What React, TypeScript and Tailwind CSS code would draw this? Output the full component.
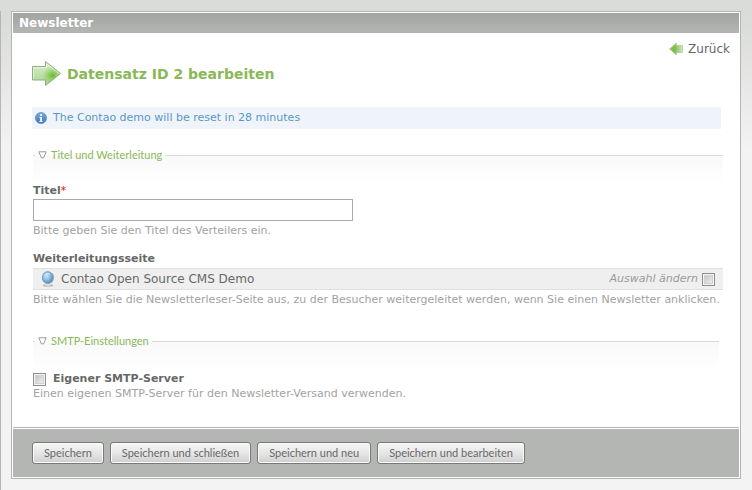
import React, { useState } from "react";

const submitButtons = [
  { name: "save", label: "Speichern" },
  { name: "saveNclose", label: "Speichern und schließen" },
  { name: "saveNcreate", label: "Speichern und neu" },
  { name: "saveNedit", label: "Speichern und bearbeiten" },
];

const ForwardIcon = () => (
  <svg width="30" height="26" viewBox="0 0 30 26" aria-hidden="true">
    <defs>
      <linearGradient id="fwdBase" x1="0" y1="0" x2="0" y2="1">
        <stop offset="0" stopColor="#dcefd2" />
        <stop offset="1" stopColor="#a9d48d" />
      </linearGradient>
      <radialGradient id="fwdGlow" cx="0.72" cy="0.58" r="0.4">
        <stop offset="0" stopColor="#6cbb2b" />
        <stop offset="1" stopColor="#8fce62" stopOpacity="0" />
      </radialGradient>
    </defs>
    <path
      d="M0.5 5.5H13.5V0.5L28.5 12.5L13.5 24.5V19H0.5Z"
      fill="url(#fwdBase)"
    />
    <path
      d="M0.5 5.5H13.5V0.5L28.5 12.5L13.5 24.5V19H0.5Z"
      fill="url(#fwdGlow)"
      stroke="#8fae80"
    />
    <path
      d="M1.5 18V6.5H14.5V2.8L27 12.5"
      fill="none"
      stroke="#fff"
      strokeOpacity="0.5"
    />
  </svg>
);

const BackIcon = () => (
  <svg width="14" height="14" viewBox="0 0 14 14" aria-hidden="true">
    <defs>
      <linearGradient id="backFill" x1="0" y1="0" x2="1" y2="0">
        <stop offset="0" stopColor="#8cc860" />
        <stop offset="0.4" stopColor="#7cbf48" />
        <stop offset="1" stopColor="#cfe8c0" />
      </linearGradient>
    </defs>
    <path
      d="M0.5 7L7.5 1V3.5H13.5V10.5H7.5V13Z"
      fill="url(#backFill)"
      stroke="#a9c99a"
      strokeWidth="0.7"
    />
  </svg>
);

const InfoIcon = () => (
  <svg width="12" height="12" viewBox="0 0 12 12" aria-hidden="true">
    <defs>
      <linearGradient id="infoFill" x1="0" y1="0" x2="0" y2="1">
        <stop offset="0" stopColor="#7fa9d8" />
        <stop offset="1" stopColor="#3c76bb" />
      </linearGradient>
    </defs>
    <circle cx="6" cy="6" r="5.6" fill="url(#infoFill)" stroke="#5b8cc6" strokeWidth="0.7" />
    <circle cx="6" cy="3" r="1.1" fill="#fff" />
    <path d="M4.5 5H6.9V9H7.7V9.9H4.4V9H5.2V5.9H4.5Z" fill="#fff" />
  </svg>
);

const GlobeIcon = () => (
  <svg width="14" height="16" viewBox="0 0 14 16" aria-hidden="true">
    <defs>
      <radialGradient id="globeFill" cx="0.4" cy="0.35" r="0.7">
        <stop offset="0" stopColor="#cfe5f5" />
        <stop offset="0.5" stopColor="#8dbbe0" />
        <stop offset="1" stopColor="#4680b5" />
      </radialGradient>
    </defs>
    <ellipse cx="7" cy="14.4" rx="5" ry="1.2" fill="#a9a9a9" />
    <ellipse cx="7" cy="13.9" rx="3.6" ry="0.8" fill="#e4e4e4" />
    <path d="M11 2C13.6 4.5 13.2 9.8 9.8 12.4" fill="none" stroke="#b9b9b9" />
    <ellipse cx="6.7" cy="6.6" rx="5.4" ry="6" fill="url(#globeFill)" stroke="#5d8fc0" strokeWidth="0.7" />
    <path d="M3.7 4C5 2.2 7.6 2 9 3.2" fill="none" stroke="#e9f4fc" strokeOpacity="0.8" />
  </svg>
);

const ToggleIcon = () => (
  <svg width="9" height="8" viewBox="0 0 9 8" aria-hidden="true">
    <path d="M0.8 0.8H8.2L5.6 6.8H3.4Z" fill="#fff" stroke="#999" />
  </svg>
);

const checkboxClass =
  "size-[13px] shrink-0 appearance-none border border-[#8e8f8f] bg-linear-to-br from-[#b8bcc0] to-[#f9f9f9] shadow-[inset_0_0_0_1px_#f4f4f4,inset_0_0_0_2px_#cfd1d3] checked:from-[#5a8a2c] checked:to-[#8ab858]";

type PaletteProps = {
  title: string;
  className?: string;
  children: React.ReactNode;
};

const Palette = ({ title, className = "", children }: PaletteProps) => {
  const [open, setOpen] = useState(true);

  return (
    <fieldset
      className={`border-t border-[#d9dbd9] bg-[linear-gradient(#f9f9f9,#fff_30px)] ${className}`}
    >
      <legend className="ml-[2px] h-4 px-[3px]">
        <button
          type="button"
          aria-expanded={open}
          onClick={() => setOpen(!open)}
          className="flex items-center gap-1 font-[Lato,sans-serif] text-[11px] leading-4 text-[#8ab858]"
        >
          <ToggleIcon />
          {title}
        </button>
      </legend>
      {open && children}
    </fieldset>
  );
};

const App = () => {
  const [title, setTitle] = useState("");

  return (
    <div className="min-h-screen bg-[#f3f3f3] bg-[linear-gradient(#dadcd9,#dadcd9_20px,#f3f3f3_150px)] pt-[11px] font-['DejaVu_Sans',Verdana,sans-serif] text-[11px] leading-4 text-[#666966]">
      <div className="min-h-[calc(100vh-11px)] border-l border-[#b3b6b3] pr-[11px] pl-[10px]">
        <main className="border border-[#b3b6b3] bg-white p-px">
          <h1 className="bg-linear-to-b from-[#a1a4a1] to-[#b3b6b3] px-[6px] py-[2px] text-[12px] font-bold text-white">
            Newsletter
          </h1>

          <form onSubmit={(e) => e.preventDefault()}>
            <div className="pr-4 pb-[26px] pl-[19px]">
              <div className="-mr-[7px] flex justify-end pt-2">
                <a href="#back" className="flex items-center gap-[5px] text-[12px]">
                  <BackIcon />
                  Zurück
                </a>
              </div>

              <h2 className="mt-1 flex items-center gap-[5px] text-[14px] font-bold text-[#8ab858]">
                <ForwardIcon />
                Datensatz ID 2 bearbeiten
              </h2>

              <p className="mt-5 mr-[2px] flex items-center gap-[6px] bg-[#eff4fb] px-[3px] py-[3px] text-[#5c97c4]">
                <InfoIcon />
                The Contao demo will be reset in 28 minutes
              </p>

              <div className="ml-px">
                <Palette title="Titel und Weiterleitung" className="mt-[18px]">
                  <div className="pt-5">
                    <label htmlFor="title" className="block font-bold">
                      Titel<span className="font-normal text-[#ff0000]">*</span>
                    </label>
                    <input
                      id="title"
                      type="text"
                      required
                      value={title}
                      onChange={(e) => setTitle(e.target.value)}
                      className="block h-[22px] w-80 max-w-full border border-[#aaa] bg-white px-1 outline-none"
                    />
                    <p className="mt-[2px] text-[#a0a3a0]">
                      Bitte geben Sie den Titel des Verteilers ein.
                    </p>
                  </div>

                  <div className="pt-3">
                    <h3 className="font-bold">Weiterleitungsseite</h3>
                    <div className="mt-px flex items-center justify-between border-y border-[#e0e0e0] bg-[#efefef] px-2 py-[2px]">
                      <span className="flex items-center gap-[6px] text-[12px]">
                        <GlobeIcon />
                        Contao Open Source CMS Demo
                      </span>
                      <label className="flex items-center gap-1 text-[#999c99] italic">
                        Auswahl ändern
                        <input type="checkbox" className={checkboxClass} />
                      </label>
                    </div>
                    <p className="mt-[2px] text-[#a0a3a0]">
                      Bitte wählen Sie die Newsletterleser-Seite aus, zu der
                      Besucher weitergeleitet werden, wenn Sie einen Newsletter
                      anklicken.
                    </p>
                  </div>
                </Palette>

                <Palette title="SMTP-Einstellungen" className="mt-[25px] mr-1">
                  <div className="pt-[22px]">
                    <label className="flex items-center gap-[7px] font-bold">
                      <input type="checkbox" className={checkboxClass} />
                      Eigener SMTP-Server
                    </label>
                    <p className="leading-[14px] text-[#a0a3a0]">
                      Einen eigenen SMTP-Server für den Newsletter-Versand
                      verwenden.
                    </p>
                  </div>
                </Palette>
              </div>
            </div>

            <div className="border-t border-[#b3b6b3] pt-px">
              <div className="flex flex-wrap gap-[6px] bg-[#b3b6b3] px-[19px] py-[13px]">
                {submitButtons.map((item) => (
                  <button
                    key={item.name}
                    name={item.name}
                    type="submit"
                    className="h-[22px] rounded-[3px] border border-[#777a77] bg-linear-to-b from-[#f6f6f6] via-[#e6e6e6] to-[#cfcfcf] px-[11px] font-[Lato,sans-serif] text-[11px] leading-4 shadow-[inset_0_0_0_1px_#fafafa]"
                  >
                    {item.label}
                  </button>
                ))}
              </div>
            </div>
          </form>
        </main>
      </div>
    </div>
  );
};

export default App;
